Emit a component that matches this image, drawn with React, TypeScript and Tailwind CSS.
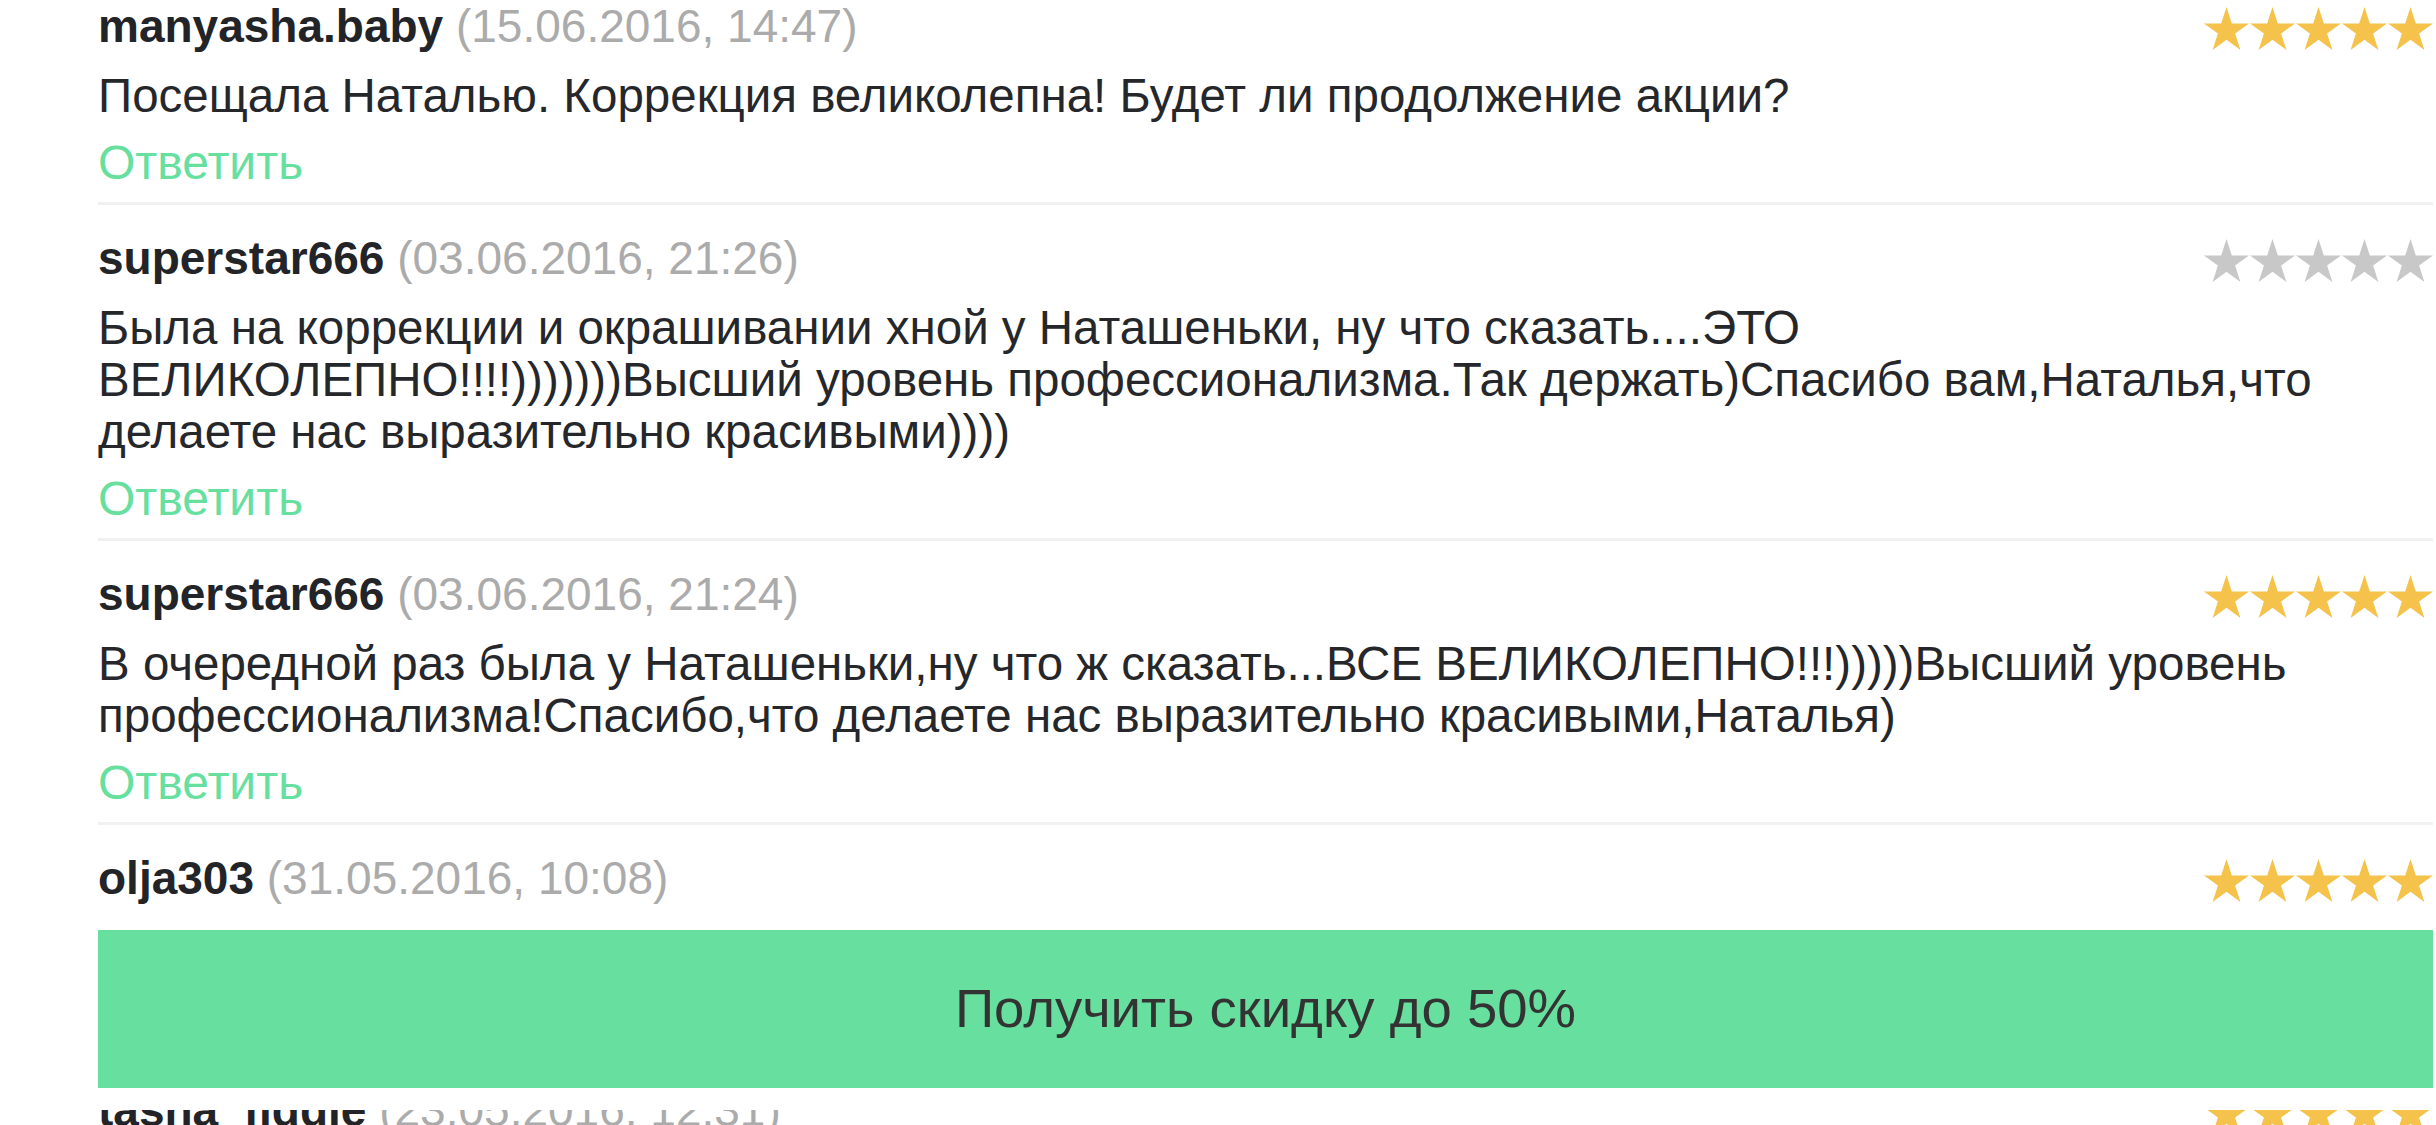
import React from "react";

type Review = {
  user: string;
  date: string;
  text: string;
  stars: number;
};

const reviews: Review[] = [
  {
    user: "manyasha.baby",
    date: "15.06.2016, 14:47",
    text: "Посещала Наталью. Коррекция великолепна! Будет ли продолжение акции?",
    stars: 5,
  },
  {
    user: "superstar666",
    date: "03.06.2016, 21:26",
    text: "Была на коррекции и окрашивании хной у Наташеньки, ну что сказать....ЭТО ВЕЛИКОЛЕПНО!!!!)))))))Высший уровень профессионализма.Так держать)Спасибо вам,Наталья,что делаете нас выразительно красивыми))))",
    stars: 0,
  },
  {
    user: "superstar666",
    date: "03.06.2016, 21:24",
    text: "В очередной раз была у Наташеньки,ну что ж сказать...ВСЕ ВЕЛИКОЛЕПНО!!!)))))Высший уровень профессионализма!Спасибо,что делаете нас выразительно красивыми,Наталья)",
    stars: 5,
  },
  {
    user: "olja303",
    date: "31.05.2016, 10:08",
    text: "Наталья, спасибо большое! Всё очень понравилось)",
    stars: 5,
  },
  {
    user: "tasha_fiddle",
    date: "23.05.2016, 12:31",
    text: "Очень довольна результатом, обязательно приду ещё!",
    stars: 5,
  },
];

function Star({ on }: { on: boolean }) {
  return (
    <svg width="45" height="43" viewBox="2.45 0 95.1 90.45" className="block">
      <polygon
        points="50,0 61.23,34.55 97.55,34.55 68.16,55.9 79.39,90.45 50,69.1 20.61,90.45 31.84,55.9 2.45,34.55 38.77,34.55"
        fill={on ? "#f5c24c" : "#c8c8c8"}
      />
    </svg>
  );
}

function Stars({ count }: { count: number }) {
  return (
    <div className="mt-[7px] flex gap-px self-start">
      {[0, 1, 2, 3, 4].map((i) => (
        <Star key={i} on={i < count} />
      ))}
    </div>
  );
}

function ReviewItem({ r, first }: { r: Review; first: boolean }) {
  return (
    <div className={first ? "" : "pt-[27px]"}>
      <div className="flex justify-between">
        <p className="text-[46px] leading-[52px] whitespace-nowrap">
          <span className="font-bold text-[#222428]">{r.user}</span>{" "}
          <span className="text-[#ababab]">({r.date})</span>
        </p>
        <Stars count={r.stars} />
      </div>
      <p className="mt-[18px] pr-[90px] text-[47.5px] leading-[52px] text-[#25272b]">{r.text}</p>
      <p className="mt-[15px] text-[48px] leading-[52px] text-[#67df9e]">Ответить</p>
      <div className="mt-[13px] h-[3px] bg-[#f1f1f1]"></div>
    </div>
  );
}

export default function App() {
  return (
    <div
      className="relative h-[1125px] w-full overflow-hidden bg-white"
      style={{ fontFamily: '"Liberation Sans", Arial, Helvetica, sans-serif' }}
    >
      <div className="pl-[98px] pr-[3px]">
        {reviews.map((r, i) => (
          <ReviewItem key={i} r={r} first={i === 0} />
        ))}
      </div>

      {/* sticky promo bar over the list */}
      <div className="absolute bottom-[15px] left-0 right-0 bg-white pt-[24px] pb-[22px] pl-[98px] pr-[3px]">
        <button className="flex h-[158px] w-full items-center justify-center bg-[#67df9e] text-[54.5px] text-[#333333]">
          Получить скидку до 50%
        </button>
      </div>
    </div>
  );
}
